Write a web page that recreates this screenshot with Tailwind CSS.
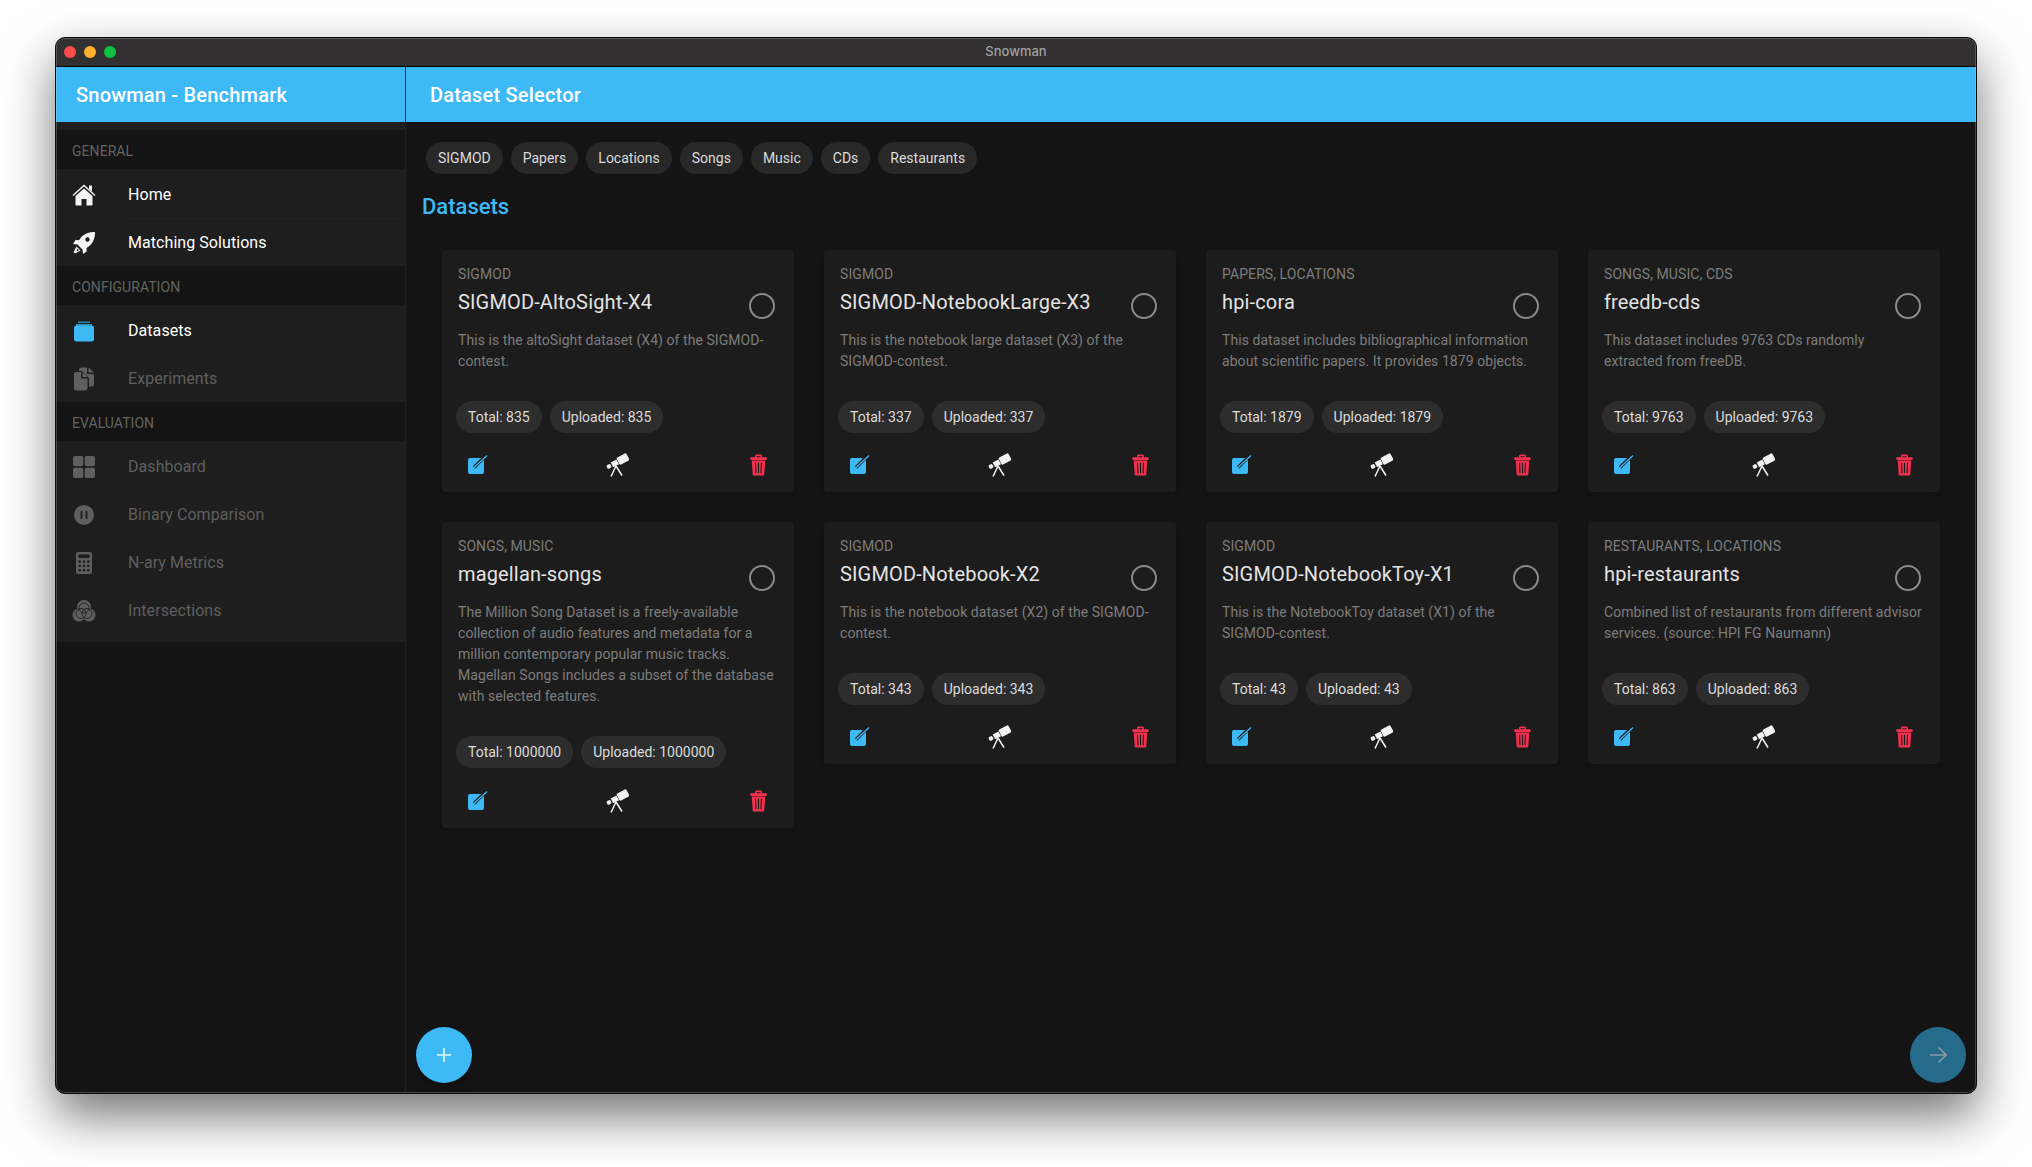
<!DOCTYPE html>
<html lang="en">
<head>
<meta charset="utf-8">
<title>Snowman</title>
<script src="https://cdn.jsdelivr.net/npm/@tailwindcss/browser@4"></script>
</head>
<body class="bg-white font-['Roboto',sans-serif] overflow-hidden w-[2032px] h-[1167px]">
<svg class="hidden" xmlns="http://www.w3.org/2000/svg">
  <symbol id="i-edit" viewBox="0 0 20 20">
    <rect x="0" y="3" width="16" height="16" rx="2" fill="#3db9f6"/>
    <path d="M6 12.500 17 1.500" stroke="#1c1c1c" stroke-width="3.200" fill="none"/>
    <path d="M5.500 13 19 .5" stroke="#3db9f6" stroke-width="1.300" fill="none"/>
  </symbol>
  <symbol id="i-scope" viewBox="0 0 24 24">
    <g fill="#f2f2f2" transform="rotate(-28 18 6)">
      <rect x="12.500" y="2" width="11" height="8" rx="1.200"/>
      <rect x="5.500" y="3.300" width="6.500" height="5.400"/>
      <rect x="0" y="4" width="4.300" height="4" rx="1.200"/>
    </g>
    <path d="M11 13 6 23.500M11 13 17 22.500" stroke="#f2f2f2" stroke-width="1.500" fill="none"/>
  </symbol>
  <symbol id="i-trash" viewBox="0 0 24 24" preserveAspectRatio="none">
    <path fill="none" stroke="#f5304f" stroke-width="2" d="M8.500 4V2.500c0-.6.400-1 1-1h5c.6 0 1 .4 1 1V4"/>
    <rect x="1.500" y="3.500" width="21" height="3" rx="1.200" fill="#f5304f"/>
    <path fill="#f5304f" fill-rule="evenodd" d="M3.500 7h17l-1.200 15c-.1 1-.9 1.500-1.800 1.500h-11c-.9 0-1.700-.5-1.800-1.500zM7.500 9.500l.6 11.500h1.400L9 9.500zM11.300 9.500V21h1.400V9.500zM15 9.500 14.500 21h1.400l.6-11.500z"/>
  </symbol>
</svg>

<div class="mt-[37px] ml-[55px] w-[1922px] h-[1057px] rounded-[10px] overflow-hidden bg-[#141414] flex flex-col border border-[#0c0c0c] shadow-[0_22px_50px_rgba(0,0,0,0.55)] relative">
  <div class="absolute inset-0 rounded-[9px] border border-white/20 pointer-events-none z-10"></div>
  <!-- title bar -->
  <div class="h-[29px] shrink-0 bg-[#323030] border-b border-black relative flex items-center justify-center">
    <div class="absolute left-[8px] top-[8px] flex gap-[8px]">
      <span class="block w-[12px] h-[12px] rounded-full bg-[#fc4b4b]"></span>
      <span class="block w-[12px] h-[12px] rounded-full bg-[#fdb12f]"></span>
      <span class="block w-[12px] h-[12px] rounded-full bg-[#0cc143]"></span>
    </div>
    <span class="text-[13px] font-medium text-[#a0a0a0] font-['Inter',sans-serif]">Snowman</span>
  </div>

  <div class="flex flex-1 min-h-0">
    <!-- sidebar -->
    <aside class="w-[350px] shrink-0 border-r border-[#222] flex flex-col bg-[#141414]">
      <div class="h-[55px] shrink-0 bg-[#3db9f6] flex items-center pl-[20px] text-white text-[20px] font-medium tracking-[0.2px]">Snowman - Benchmark</div>
      <div class="h-[8px] bg-[#1e1e1e]"></div>
      <div class="h-[39px] pl-[16px] pt-[3px] flex items-center text-[14px] text-[#636363] tracking-[0.05px]">GENERAL</div>
      <div class="bg-[#1e1e1e] h-[97px] pt-[2px]">
        <div class="h-[48px] flex items-center text-white text-[16px] tracking-[0.06px] relative">
          <span class="w-[72px] pl-[16px] flex">
            <svg class="w-[24px] h-[24px]" viewBox="0 0 24 24"><path fill="#f4f4f4" d="M12 5.500 3.500 13v8.500c0 .6.400 1 1 1h5v-6.500h5V22.500h5c.6 0 1-.4 1-1V13z"/><path fill="none" stroke="#f4f4f4" stroke-width="1.400" d="M1 12.500 12 2.500l11 10"/><path fill="#f4f4f4" d="M17 2.500h3v6l-3-2.700z"/></svg>
          </span>
          <span>Home</span>
          <span class="absolute left-[72px] right-0 bottom-0 h-px bg-[#222]"></span>
        </div>
        <div class="h-[47px] flex items-center text-white text-[16px] tracking-[0.06px]">
          <span class="w-[72px] pl-[16px] flex">
            <svg class="w-[24px] h-[24px]" viewBox="0 0 24 24"><path fill="#f4f4f4" fill-rule="evenodd" d="M23 1c.2 5.500-1.500 10-5 13.500l-3.500 2.500.2 3.500-3.700 2.500-.5-4.500-5-5-4.500-.5L3.500 9 7 9.200l2.500-3.500C13 2.500 17.500.8 23 1zM15.500 6.300a2.200 2.200 0 1 0 0 4.400 2.200 2.200 0 0 0 0-4.400z"/><path fill="#f4f4f4" d="M4.500 15.500 8.500 19.500 3 22.500 1.500 21z"/><circle cx="5.500" cy="19" r="1" fill="#1e1e1e"/></svg>
          </span>
          <span>Matching Solutions</span>
        </div>
      </div>
      <div class="h-[39px] pl-[16px] pt-[3px] flex items-center text-[14px] text-[#636363] tracking-[0.05px]">CONFIGURATION</div>
      <div class="bg-[#1e1e1e] h-[97px] pt-[2px]">
        <div class="h-[48px] flex items-center text-white text-[16px] tracking-[0.06px]">
          <span class="w-[72px] pl-[16px] flex">
            <svg class="w-[24px] h-[24px]" viewBox="0 0 24 24"><path fill="#2b7fa8" d="M6 2.500h12v1.500H6z"/><path fill="#2f90bf" d="M4 5h16v2H4z"/><rect x="2" y="6.500" width="20" height="16" rx="2.500" fill="#3db9f6"/></svg>
          </span>
          <span>Datasets</span>
        </div>
        <div class="h-[47px] flex items-center text-[#5f5f5f] text-[16px] tracking-[0.06px]">
          <span class="w-[72px] pl-[16px] flex">
            <svg class="w-[24px] h-[24px]" viewBox="0 0 24 24"><path fill="#5f5f5f" d="M9 .500h6v6.500h7V17c0 1.500-1 2.500-2.500 2.500H17V11L10 4H7V3C7 1.500 8 .500 9 .500z"/><path fill="#5f5f5f" d="M16.500.500 22 5.500h-5.500z"/><path fill="#5f5f5f" d="M4 5h5v6.500h6.500V21c0 1.600-1 2.500-2.500 2.500H4.500C3 23.500 2 22.500 2 21V7c0-1.200.8-2 2-2z"/><path fill="#5f5f5f" d="M10.500 5 15.500 10h-5z"/></svg>
          </span>
          <span>Experiments</span>
        </div>
      </div>
      <div class="h-[39px] pl-[16px] pt-[3px] flex items-center text-[14px] text-[#636363] tracking-[0.05px]">EVALUATION</div>
      <div class="bg-[#1e1e1e] h-[201px] pt-[2px]">
        <div class="h-[48px] flex items-center text-[#5f5f5f] text-[16px] tracking-[0.06px]">
          <span class="w-[72px] pl-[16px] flex">
            <svg class="w-[24px] h-[24px]" viewBox="0 0 24 24" fill="#5f5f5f"><rect x="1" y="1" width="10.300" height="10.300" rx="2"/><rect x="12.700" y="1" width="10.300" height="10.300" rx="2"/><rect x="1" y="12.700" width="10.300" height="10.300" rx="2"/><rect x="12.700" y="12.700" width="10.300" height="10.300" rx="2"/></svg>
          </span>
          <span>Dashboard</span>
        </div>
        <div class="h-[48px] flex items-center text-[#5f5f5f] text-[16px] tracking-[0.06px]">
          <span class="w-[72px] pl-[16px] flex">
            <svg class="w-[24px] h-[24px]" viewBox="0 0 24 24"><circle cx="12" cy="12" r="10" fill="#5f5f5f"/><path d="M9.500 8v8M14.500 8v8" stroke="#1e1e1e" stroke-width="1.800"/></svg>
          </span>
          <span>Binary Comparison</span>
        </div>
        <div class="h-[48px] flex items-center text-[#5f5f5f] text-[16px] tracking-[0.06px]">
          <span class="w-[72px] pl-[16px] flex">
            <svg class="w-[24px] h-[24px]" viewBox="0 0 24 24"><rect x="4" y="1" width="16" height="22" rx="2.500" fill="#5f5f5f"/><rect x="6.500" y="3.300" width="11" height="3.700" fill="#1e1e1e"/><g fill="#1e1e1e"><rect x="6.500" y="9.500" width="2.400" height="2.400"/><rect x="10.800" y="9.500" width="2.400" height="2.400"/><rect x="15.100" y="9.500" width="2.400" height="2.400"/><rect x="6.500" y="13.700" width="2.400" height="2.400"/><rect x="10.800" y="13.700" width="2.400" height="2.400"/><rect x="15.100" y="13.700" width="2.400" height="2.400"/><rect x="6.500" y="18" width="2.400" height="2.400"/><rect x="10.800" y="18" width="2.400" height="2.400"/><rect x="15.100" y="18" width="2.400" height="2.400"/></g></svg>
          </span>
          <span>N-ary Metrics</span>
        </div>
        <div class="h-[48px] flex items-center text-[#5f5f5f] text-[16px] tracking-[0.06px]">
          <span class="w-[72px] pl-[16px] flex">
            <svg class="w-[24px] h-[24px]" viewBox="0 0 24 24"><g fill="#5f5f5f"><circle cx="12" cy="8" r="7"/><circle cx="7" cy="16" r="6.500"/><circle cx="17" cy="16" r="6.500"/></g><g fill="none" stroke="#1e1e1e" stroke-width="0.900"><circle cx="12" cy="9" r="5"/><circle cx="9" cy="14.500" r="5"/><circle cx="15" cy="14.500" r="5"/></g></svg>
          </span>
          <span>Intersections</span>
        </div>
      </div>
    </aside>

    <!-- main -->
    <main class="flex-1 min-w-0 flex flex-col relative">
      <div class="h-[55px] shrink-0 bg-[#3db9f6] flex items-center pl-[24px] text-white text-[20px] font-medium tracking-[0.2px]">Dataset Selector</div>
      <div class="pl-[16px] pt-[20px]">
        <div class="flex gap-[8px] pl-[4px]">
          <span class="h-[32px] px-[12px] rounded-full bg-[#282828] text-[#dcdcdc] text-[14px] flex items-center">SIGMOD</span>
          <span class="h-[32px] px-[12px] rounded-full bg-[#282828] text-[#dcdcdc] text-[14px] flex items-center">Papers</span>
          <span class="h-[32px] px-[12px] rounded-full bg-[#282828] text-[#dcdcdc] text-[14px] flex items-center">Locations</span>
          <span class="h-[32px] px-[12px] rounded-full bg-[#282828] text-[#dcdcdc] text-[14px] flex items-center">Songs</span>
          <span class="h-[32px] px-[12px] rounded-full bg-[#282828] text-[#dcdcdc] text-[14px] flex items-center">Music</span>
          <span class="h-[32px] px-[12px] rounded-full bg-[#282828] text-[#dcdcdc] text-[14px] flex items-center">CDs</span>
          <span class="h-[32px] px-[12px] rounded-full bg-[#282828] text-[#dcdcdc] text-[14px] flex items-center">Restaurants</span>
        </div>
        <h2 class="mt-[17px] h-[32px] leading-[32px] text-[22px] font-medium text-[#3db9f6]">Datasets</h2>
        <div class="mt-[27px] ml-[20px] grid grid-cols-[352px_352px_352px_352px] gap-[30px] items-start">

          <!-- card 1 -->
          <div class="bg-[#1c1c1c] rounded-[4px] h-[242px] px-[16px] pt-[15px] relative shadow-md flex flex-col">
            <div class="text-[14px] leading-[18px] text-[#7d7d7d] tracking-[0.08px]">SIGMOD</div>
            <div class="text-[20px] leading-[32px] text-[#e3e3e3] mt-[3px] tracking-[0.15px]">SIGMOD-AltoSight-X4</div>
            <span class="absolute left-[307px] top-[43px] w-[26px] h-[26px] rounded-full border-2 border-[#8a8a8a]"></span>
            <p class="mt-[12px] text-[14px] leading-[21px] text-[#7c7c7c] tracking-[0.06px]">This is the altoSight dataset (X4) of the SIGMOD-contest.</p>
            <div class="absolute left-[14px] top-[151px] flex gap-[8px]">
              <span class="h-[32px] px-[12px] rounded-full bg-[#2d2d2d] text-[#dcdcdc] text-[14px] flex items-center">Total: 835</span>
              <span class="h-[32px] px-[12px] rounded-full bg-[#2d2d2d] text-[#dcdcdc] text-[14px] flex items-center">Uploaded: 835</span>
            </div>
            <div class="absolute left-0 right-0 bottom-[15px] flex justify-between items-center pl-[26px] pr-[26px]">
              <svg class="w-[20px] h-[20px]"><use href="#i-edit"/></svg>
              <svg class="w-[24px] h-[24px] mr-[3px]"><use href="#i-scope"/></svg>
              <svg class="w-[19px] h-[22px]"><use href="#i-trash"/></svg>
            </div>
          </div>

          <!-- card 2 -->
          <div class="bg-[#1c1c1c] rounded-[4px] h-[242px] px-[16px] pt-[15px] relative shadow-md flex flex-col">
            <div class="text-[14px] leading-[18px] text-[#7d7d7d] tracking-[0.08px]">SIGMOD</div>
            <div class="text-[20px] leading-[32px] text-[#e3e3e3] mt-[3px] tracking-[0.15px]">SIGMOD-NotebookLarge-X3</div>
            <span class="absolute left-[307px] top-[43px] w-[26px] h-[26px] rounded-full border-2 border-[#8a8a8a]"></span>
            <p class="mt-[12px] text-[14px] leading-[21px] text-[#7c7c7c] tracking-[0.06px]">This is the notebook large dataset (X3) of the SIGMOD-contest.</p>
            <div class="absolute left-[14px] top-[151px] flex gap-[8px]">
              <span class="h-[32px] px-[12px] rounded-full bg-[#2d2d2d] text-[#dcdcdc] text-[14px] flex items-center">Total: 337</span>
              <span class="h-[32px] px-[12px] rounded-full bg-[#2d2d2d] text-[#dcdcdc] text-[14px] flex items-center">Uploaded: 337</span>
            </div>
            <div class="absolute left-0 right-0 bottom-[15px] flex justify-between items-center pl-[26px] pr-[26px]">
              <svg class="w-[20px] h-[20px]"><use href="#i-edit"/></svg>
              <svg class="w-[24px] h-[24px] mr-[3px]"><use href="#i-scope"/></svg>
              <svg class="w-[19px] h-[22px]"><use href="#i-trash"/></svg>
            </div>
          </div>

          <!-- card 3 -->
          <div class="bg-[#1c1c1c] rounded-[4px] h-[242px] px-[16px] pt-[15px] relative shadow-md flex flex-col">
            <div class="text-[14px] leading-[18px] text-[#7d7d7d] tracking-[0.08px]">PAPERS, LOCATIONS</div>
            <div class="text-[20px] leading-[32px] text-[#e3e3e3] mt-[3px] tracking-[0.15px]">hpi-cora</div>
            <span class="absolute left-[307px] top-[43px] w-[26px] h-[26px] rounded-full border-2 border-[#8a8a8a]"></span>
            <p class="mt-[12px] text-[14px] leading-[21px] text-[#7c7c7c] tracking-[0.06px]">This dataset includes bibliographical information about scientific papers. It provides 1879 objects.</p>
            <div class="absolute left-[14px] top-[151px] flex gap-[8px]">
              <span class="h-[32px] px-[12px] rounded-full bg-[#2d2d2d] text-[#dcdcdc] text-[14px] flex items-center">Total: 1879</span>
              <span class="h-[32px] px-[12px] rounded-full bg-[#2d2d2d] text-[#dcdcdc] text-[14px] flex items-center">Uploaded: 1879</span>
            </div>
            <div class="absolute left-0 right-0 bottom-[15px] flex justify-between items-center pl-[26px] pr-[26px]">
              <svg class="w-[20px] h-[20px]"><use href="#i-edit"/></svg>
              <svg class="w-[24px] h-[24px] mr-[3px]"><use href="#i-scope"/></svg>
              <svg class="w-[19px] h-[22px]"><use href="#i-trash"/></svg>
            </div>
          </div>

          <!-- card 4 -->
          <div class="bg-[#1c1c1c] rounded-[4px] h-[242px] px-[16px] pt-[15px] relative shadow-md flex flex-col">
            <div class="text-[14px] leading-[18px] text-[#7d7d7d] tracking-[0.08px]">SONGS, MUSIC, CDS</div>
            <div class="text-[20px] leading-[32px] text-[#e3e3e3] mt-[3px] tracking-[0.15px]">freedb-cds</div>
            <span class="absolute left-[307px] top-[43px] w-[26px] h-[26px] rounded-full border-2 border-[#8a8a8a]"></span>
            <p class="mt-[12px] text-[14px] leading-[21px] text-[#7c7c7c] tracking-[0.06px]">This dataset includes 9763 CDs randomly extracted from freeDB.</p>
            <div class="absolute left-[14px] top-[151px] flex gap-[8px]">
              <span class="h-[32px] px-[12px] rounded-full bg-[#2d2d2d] text-[#dcdcdc] text-[14px] flex items-center">Total: 9763</span>
              <span class="h-[32px] px-[12px] rounded-full bg-[#2d2d2d] text-[#dcdcdc] text-[14px] flex items-center">Uploaded: 9763</span>
            </div>
            <div class="absolute left-0 right-0 bottom-[15px] flex justify-between items-center pl-[26px] pr-[26px]">
              <svg class="w-[20px] h-[20px]"><use href="#i-edit"/></svg>
              <svg class="w-[24px] h-[24px] mr-[3px]"><use href="#i-scope"/></svg>
              <svg class="w-[19px] h-[22px]"><use href="#i-trash"/></svg>
            </div>
          </div>

          <!-- card 5 -->
          <div class="bg-[#1c1c1c] rounded-[4px] h-[306px] px-[16px] pt-[15px] relative shadow-md flex flex-col">
            <div class="text-[14px] leading-[18px] text-[#7d7d7d] tracking-[0.08px]">SONGS, MUSIC</div>
            <div class="text-[20px] leading-[32px] text-[#e3e3e3] mt-[3px] tracking-[0.15px]">magellan-songs</div>
            <span class="absolute left-[307px] top-[43px] w-[26px] h-[26px] rounded-full border-2 border-[#8a8a8a]"></span>
            <p class="mt-[12px] text-[14px] leading-[21px] text-[#7c7c7c] tracking-[0.06px]">The Million Song Dataset is a freely-available collection of audio features and metadata for a million contemporary popular music tracks. Magellan Songs includes a subset of the database with selected features.</p>
            <div class="absolute left-[14px] top-[214px] flex gap-[8px]">
              <span class="h-[32px] px-[12px] rounded-full bg-[#2d2d2d] text-[#dcdcdc] text-[14px] flex items-center">Total: 1000000</span>
              <span class="h-[32px] px-[12px] rounded-full bg-[#2d2d2d] text-[#dcdcdc] text-[14px] flex items-center">Uploaded: 1000000</span>
            </div>
            <div class="absolute left-0 right-0 bottom-[15px] flex justify-between items-center pl-[26px] pr-[26px]">
              <svg class="w-[20px] h-[20px]"><use href="#i-edit"/></svg>
              <svg class="w-[24px] h-[24px] mr-[3px]"><use href="#i-scope"/></svg>
              <svg class="w-[19px] h-[22px]"><use href="#i-trash"/></svg>
            </div>
          </div>

          <!-- card 6 -->
          <div class="bg-[#1c1c1c] rounded-[4px] h-[242px] px-[16px] pt-[15px] relative shadow-md flex flex-col">
            <div class="text-[14px] leading-[18px] text-[#7d7d7d] tracking-[0.08px]">SIGMOD</div>
            <div class="text-[20px] leading-[32px] text-[#e3e3e3] mt-[3px] tracking-[0.15px]">SIGMOD-Notebook-X2</div>
            <span class="absolute left-[307px] top-[43px] w-[26px] h-[26px] rounded-full border-2 border-[#8a8a8a]"></span>
            <p class="mt-[12px] text-[14px] leading-[21px] text-[#7c7c7c] tracking-[0.06px]">This is the notebook dataset (X2) of the SIGMOD-contest.</p>
            <div class="absolute left-[14px] top-[151px] flex gap-[8px]">
              <span class="h-[32px] px-[12px] rounded-full bg-[#2d2d2d] text-[#dcdcdc] text-[14px] flex items-center">Total: 343</span>
              <span class="h-[32px] px-[12px] rounded-full bg-[#2d2d2d] text-[#dcdcdc] text-[14px] flex items-center">Uploaded: 343</span>
            </div>
            <div class="absolute left-0 right-0 bottom-[15px] flex justify-between items-center pl-[26px] pr-[26px]">
              <svg class="w-[20px] h-[20px]"><use href="#i-edit"/></svg>
              <svg class="w-[24px] h-[24px] mr-[3px]"><use href="#i-scope"/></svg>
              <svg class="w-[19px] h-[22px]"><use href="#i-trash"/></svg>
            </div>
          </div>

          <!-- card 7 -->
          <div class="bg-[#1c1c1c] rounded-[4px] h-[242px] px-[16px] pt-[15px] relative shadow-md flex flex-col">
            <div class="text-[14px] leading-[18px] text-[#7d7d7d] tracking-[0.08px]">SIGMOD</div>
            <div class="text-[20px] leading-[32px] text-[#e3e3e3] mt-[3px] tracking-[0.15px]">SIGMOD-NotebookToy-X1</div>
            <span class="absolute left-[307px] top-[43px] w-[26px] h-[26px] rounded-full border-2 border-[#8a8a8a]"></span>
            <p class="mt-[12px] text-[14px] leading-[21px] text-[#7c7c7c] tracking-[0.06px]">This is the NotebookToy dataset (X1) of the SIGMOD-contest.</p>
            <div class="absolute left-[14px] top-[151px] flex gap-[8px]">
              <span class="h-[32px] px-[12px] rounded-full bg-[#2d2d2d] text-[#dcdcdc] text-[14px] flex items-center">Total: 43</span>
              <span class="h-[32px] px-[12px] rounded-full bg-[#2d2d2d] text-[#dcdcdc] text-[14px] flex items-center">Uploaded: 43</span>
            </div>
            <div class="absolute left-0 right-0 bottom-[15px] flex justify-between items-center pl-[26px] pr-[26px]">
              <svg class="w-[20px] h-[20px]"><use href="#i-edit"/></svg>
              <svg class="w-[24px] h-[24px] mr-[3px]"><use href="#i-scope"/></svg>
              <svg class="w-[19px] h-[22px]"><use href="#i-trash"/></svg>
            </div>
          </div>

          <!-- card 8 -->
          <div class="bg-[#1c1c1c] rounded-[4px] h-[242px] px-[16px] pt-[15px] relative shadow-md flex flex-col">
            <div class="text-[14px] leading-[18px] text-[#7d7d7d] tracking-[0.08px]">RESTAURANTS, LOCATIONS</div>
            <div class="text-[20px] leading-[32px] text-[#e3e3e3] mt-[3px] tracking-[0.15px]">hpi-restaurants</div>
            <span class="absolute left-[307px] top-[43px] w-[26px] h-[26px] rounded-full border-2 border-[#8a8a8a]"></span>
            <p class="mt-[12px] text-[14px] leading-[21px] text-[#7c7c7c] tracking-[0.06px]">Combined list of restaurants from different advisor services. (source: HPI FG Naumann)</p>
            <div class="absolute left-[14px] top-[151px] flex gap-[8px]">
              <span class="h-[32px] px-[12px] rounded-full bg-[#2d2d2d] text-[#dcdcdc] text-[14px] flex items-center">Total: 863</span>
              <span class="h-[32px] px-[12px] rounded-full bg-[#2d2d2d] text-[#dcdcdc] text-[14px] flex items-center">Uploaded: 863</span>
            </div>
            <div class="absolute left-0 right-0 bottom-[15px] flex justify-between items-center pl-[26px] pr-[26px]">
              <svg class="w-[20px] h-[20px]"><use href="#i-edit"/></svg>
              <svg class="w-[24px] h-[24px] mr-[3px]"><use href="#i-scope"/></svg>
              <svg class="w-[19px] h-[22px]"><use href="#i-trash"/></svg>
            </div>
          </div>
        </div>
      </div>

      <!-- floating buttons -->
      <button class="absolute left-[10px] bottom-[10px] w-[56px] h-[56px] rounded-full bg-[#3db9f6] flex items-center justify-center shadow-lg">
        <svg class="w-[16px] h-[16px]" viewBox="0 0 16 16"><path d="M8 1v14M1 8h14" stroke="#e8f4fa" stroke-width="1.600"/></svg>
      </button>
      <button class="absolute right-[10px] bottom-[10px] w-[56px] h-[56px] rounded-full bg-[#246b8c] flex items-center justify-center">
        <svg class="w-[18px] h-[18px]" viewBox="0 0 18 18" fill="none"><path d="M1 9h15.500M9.500 1.500 17 9l-7.500 7.500" stroke="#8e9a9f" stroke-width="1.600"/></svg>
      </button>
    </main>
  </div>
</div>
</body>
</html>
